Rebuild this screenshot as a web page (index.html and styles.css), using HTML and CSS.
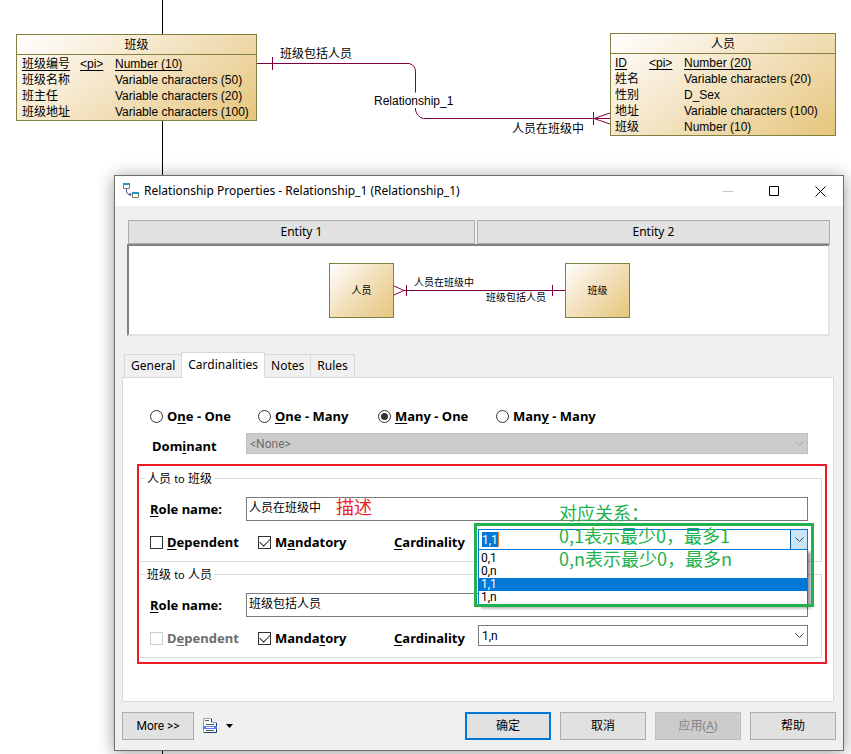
FILE: index.html
```html
<!DOCTYPE html>
<html lang="zh-CN">
<head>
<meta charset="utf-8">
<title>Relationship Properties</title>
<link rel="stylesheet" href="styles.css">
</head>
<body>
<main class="canvas">
  <div class="page-line"></div>

  <svg class="connector" width="353" height="80" viewBox="0 0 353 80" fill="none" stroke="#7f003f" aria-hidden="true">
    <path d="M0 13.5H152Q158.500 15 158.500 22V42.500M158.500 58V60Q160 67 166.500 68.500H353M15.500 7V20M336.500 62V75M337 68.500L353 63M337 68.500L353 74"/>
  </svg>
  <span class="role role-start">班级包括人员</span>
  <span class="role role-name">Relationship_1</span>
  <span class="role role-end">人员在班级中</span>

  <table class="entity entity-class">
    <thead><tr><th colspan="3">班级</th></tr></thead>
    <tbody>
      <tr class="key"><td><u>班级编号</u></td><td><u>&lt;pi&gt;</u></td><td><u>Number (10)</u></td></tr>
      <tr><td>班级名称</td><td></td><td>Variable characters (50)</td></tr>
      <tr><td>班主任</td><td></td><td>Variable characters (20)</td></tr>
      <tr><td>班级地址</td><td></td><td>Variable characters (100)</td></tr>
    </tbody>
  </table>

  <table class="entity entity-person">
    <thead><tr><th colspan="3">人员</th></tr></thead>
    <tbody>
      <tr class="key"><td><u>ID</u></td><td><u>&lt;pi&gt;</u></td><td><u>Number (20)</u></td></tr>
      <tr><td>姓名</td><td></td><td>Variable characters (20)</td></tr>
      <tr><td>性别</td><td></td><td>D_Sex</td></tr>
      <tr><td>地址</td><td></td><td>Variable characters (100)</td></tr>
      <tr><td>班级</td><td></td><td>Number (10)</td></tr>
    </tbody>
  </table>

  <section class="dialog" role="dialog" aria-labelledby="dialog-title">
    <header class="titlebar">
      <svg class="app-icon" width="17" height="16" viewBox="0 0 17 16" aria-hidden="true">
        <path d="M.5 1.500H6.500V5.500H.5ZM9.500 10.500H15.500V14.500H9.500Z" fill="#fff" stroke="#7b7b5c"/>
        <path d="M0 0H7V2H0ZM9 9H16V11H9Z" fill="#2596be"/>
        <path d="M3.500 6V9L5.500 11.500H8.500M7 10V13" fill="none" stroke="#3f48a8"/>
      </svg>
      <h1 id="dialog-title">Relationship Properties - Relationship_1 (Relationship_1)</h1>
      <button type="button" class="caption" aria-label="Minimize" disabled><svg width="11" height="11" viewBox="0 0 11 11"><path d="M0 5.500H10" stroke="#c4c4c4"/></svg></button>
      <button type="button" class="caption" aria-label="Maximize"><svg width="11" height="11" viewBox="0 0 11 11"><path d="M.5 .5H9.500V9.500H.5Z" fill="none" stroke="#000"/></svg></button>
      <button type="button" class="caption" aria-label="Close"><svg width="11" height="11" viewBox="0 0 11 11"><path d="M.5 .5L10.500 10.500M10.500 .5L.5 10.500" stroke="#000"/></svg></button>
    </header>

    <div class="overview">
      <div class="entity-buttons">
        <button type="button" class="btn">Entity 1</button>
        <button type="button" class="btn">Entity 2</button>
      </div>
      <div class="preview">
        <div class="node">人员</div>
        <svg width="171" height="55" viewBox="0 0 171 55" aria-hidden="true">
          <path d="M9 27.500H171M12.500 22V33M158.500 22V33M0 23L10 27.500L0 32" fill="none" stroke="#7f003f"/>
          <text x="20" y="23">人员在班级中</text>
          <text x="92" y="38">班级包括人员</text>
        </svg>
        <div class="node">班级</div>
      </div>
    </div>

    <nav class="tabs" role="tablist">
      <button type="button" role="tab">General</button>
      <button type="button" role="tab" class="active" aria-selected="true">Cardinalities</button>
      <button type="button" role="tab">Notes</button>
      <button type="button" role="tab">Rules</button>
    </nav>

    <form class="panel">
      <div class="kinds">
        <label><input type="radio" name="kind"><span>O<u>n</u>e - One</span></label>
        <label><input type="radio" name="kind"><span><u>O</u>ne - Many</span></label>
        <label><input type="radio" name="kind" checked><span><u>M</u>any - One</span></label>
        <label><input type="radio" name="kind"><span>Man<u>y</u> - Many</span></label>
      </div>
      <div class="dominant">
        <label for="dominant">Dom<u>i</u>nant</label>
        <div class="combo">
          <select id="dominant" disabled><option>&lt;None&gt;</option></select>
          <svg class="chevron" width="9" height="6" viewBox="0 0 9 6"><path d="M.5 .5L4.500 4.500L8.500 .5" fill="none" stroke="#a0a0a0"/></svg>
        </div>
      </div>

      <div class="marked">
        <fieldset>
          <legend>人员 <small>to</small> 班级</legend>
          <div class="role-row">
            <label for="role-a"><u>R</u>ole name:</label>
            <input id="role-a" type="text" value="人员在班级中">
            <span class="note note-red">描述</span>
          </div>
          <div class="option-row">
            <label class="check"><input type="checkbox"><span><u>D</u>ependent</span></label>
            <label class="check"><input type="checkbox" checked><span>M<u>a</u>ndatory</span></label>
            <label for="card-a" class="card-label"><u>C</u>ardinality</label>
            <div class="combo open">
              <div class="combo-field">
                <input id="card-a" type="text" value="1,1" role="combobox" aria-expanded="true">
                <button type="button" aria-label="Cardinality list"><svg width="9" height="6" viewBox="0 0 9 6"><path d="M.5 .5L4.500 4.500L8.500 .5" fill="none" stroke="#444"/></svg></button>
              </div>
              <ul class="options" role="listbox">
                <li role="option">0,1</li>
                <li role="option">0,n</li>
                <li role="option" class="selected" aria-selected="true">1,1</li>
                <li role="option">1,n</li>
              </ul>
              <div class="green-frame"></div>
              <p class="note note-green">对应关系：<br>0,1表示最少0，最多1<br>0,n表示最少0，最多n</p>
            </div>
          </div>
        </fieldset>
        <fieldset>
          <legend>班级 <small>to</small> 人员</legend>
          <div class="role-row">
            <label for="role-b"><u>R</u>ole name:</label>
            <input id="role-b" type="text" value="班级包括人员">
          </div>
          <div class="option-row">
            <label class="check"><input type="checkbox" disabled><span>D<u>e</u>pendent</span></label>
            <label class="check"><input type="checkbox" checked><span>Manda<u>t</u>ory</span></label>
            <label for="card-b" class="card-label"><u>C</u>ardinality</label>
            <div class="combo">
              <select id="card-b"><option>1,n</option></select>
              <svg class="chevron" width="9" height="6" viewBox="0 0 9 6"><path d="M.5 .5L4.500 4.500L8.500 .5" fill="none" stroke="#444"/></svg>
            </div>
          </div>
        </fieldset>
      </div>
    </form>

    <footer class="actions">
      <button type="button" class="btn more">More &gt;&gt;</button>
      <button type="button" class="menu" aria-label="Properties menu">
        <svg width="31" height="16" viewBox="0 0 31 16">
          <path d="M.5 14.500V.5H8.500V4.500H13.500V14.500Z" fill="#fff" stroke="#8aa0c8"/>
          <path d="M1 14.500H13.500V5M8.500 1V4" fill="none" stroke="#1f3864"/>
          <path d="M0 8H14V11H0Z" fill="#5b7cff"/>
          <path d="M2 2.500H6M3 6.500H11M3 12.500H11" stroke="#555"/>
          <path d="M3 9.500H11" stroke="#fff"/>
          <path d="M23 6H30L26.500 10Z" fill="#000"/>
        </svg>
      </button>
      <button type="button" class="btn default">确定</button>
      <button type="button" class="btn">取消</button>
      <button type="button" class="btn" disabled>应用(<u>A</u>)</button>
      <button type="button" class="btn">帮助</button>
    </footer>
  </section>
</main>
</body>
</html>
```
FILE: styles.css
```css
* { box-sizing: border-box; }

body {
  margin: 0;
  background: #fff;
  color: #000;
  font: 12px/16px "Noto Sans", "Noto Sans CJK SC", sans-serif;
}

button, input, select {
  margin: 0;
  font: inherit;
  color: inherit;
  border-radius: 0;
}

u { text-underline-offset: 2px; }

/* Diagram canvas */
.canvas {
  position: relative;
  min-height: 100vh;
  overflow: hidden;
}

.page-line {
  position: absolute;
  top: 0;
  bottom: 0;
  left: 162px;
  border-left: 1px solid #000;
}

.connector {
  position: absolute;
  left: 257px;
  top: 50px;
}

.role, .entity { font: 12px/16px "Liberation Sans", "Noto Sans CJK SC", sans-serif; }

.role { position: absolute; white-space: nowrap; }
.role-start { left: 280px; top: 46px; }
.role-name { left: 374px; top: 93px; }
.role-end { left: 512px; top: 121px; }

.entity {
  position: absolute;
  border: 1px solid #808040;
  border-spacing: 0;
  background: linear-gradient(145deg, #fff, #f3e2c0 50%, #e6c67c);
  white-space: nowrap;
}
.entity th {
  height: 20px;
  padding: 0;
  border-bottom: 1px solid #808040;
  font-weight: 400;
}
.entity td { height: 16px; padding: 0; line-height: 16px; }
.entity .key td { height: 17px; padding-top: 1px; }
.entity td:first-child { padding-left: 5px; }
.entity-class { left: 16px; top: 34px; width: 241px; }
.entity-class td:nth-child(1) { width: 63px; }
.entity-class td:nth-child(2) { width: 35px; }
.entity-person { left: 610px; top: 33px; width: 226px; }
.entity-person td:nth-child(1) { width: 38px; padding-left: 4px; }
.entity-person td:nth-child(2) { width: 35px; }

/* Dialog window */
.dialog {
  position: absolute;
  top: 175px;
  left: 114px;
  right: 7px;
  border: 1px solid #6e6e6e;
  background: #f0f0f0;
  box-shadow: 0 2px 16px rgba(0, 0, 0, 0.4);
}

.titlebar {
  display: flex;
  align-items: center;
  height: 30px;
  padding-left: 8px;
  background: #fff;
}
.titlebar h1 {
  flex: 1;
  margin: 0 0 0 4px;
  font-size: 12px;
  font-weight: 400;
}
.caption {
  display: flex;
  align-items: center;
  justify-content: center;
  width: 46px;
  height: 28px;
  padding: 0;
  border: 0;
  background: none;
}

.btn {
  height: 28px;
  padding: 0;
  border: 1px solid #adadad;
  background: #e1e1e1;
}
.btn:disabled { border-color: #bfbfbf; background: #ccc; color: #838383; }
.btn.default { border: 2px solid #0078d7; }

.overview { padding: 14px 13px 0 12px; }
.entity-buttons {
  display: flex;
  gap: 2px;
  padding-left: 1px;
}
.entity-buttons .btn { flex: 1 1 346px; height: 24px; }
.entity-buttons .btn + .btn { flex-basis: 352px; }

.preview {
  display: flex;
  align-items: center;
  justify-content: center;
  height: 92px;
  padding-left: 2px;
  border: 2px solid;
  border-color: #828282 #e3e3e3 #e3e3e3 #828282;
  background: #fff;
}
.preview text { font-size: 10px; }
.node {
  display: flex;
  align-items: center;
  justify-content: center;
  width: 65px;
  height: 55px;
  border: 1px solid #808040;
  background: linear-gradient(135deg, #fff, #f3e2c0 45%, #e6c67c);
  font-size: 10px;
}

.tabs {
  display: flex;
  align-items: flex-end;
  height: 41px;
  padding-left: 10px;
}
.tabs button {
  height: 23px;
  margin-left: -1px;
  padding: 0 6px;
  border: 1px solid #d9d9d9;
  border-bottom: 0;
  background: #f0f0f0;
}
.tabs .active {
  position: relative;
  height: 26px;
  margin-bottom: -1px;
  padding-bottom: 2px;
  background: #fff;
}

.panel {
  margin: 0 9px 0 7px;
  padding: 30px 6px 37px 14px;
  border: 1px solid #d9d9d9;
  background: #fff;
}

.panel label { font-size: 13px; font-weight: 700; white-space: nowrap; }

.kinds {
  display: grid;
  grid-template-columns: 108px 120px 118px 1fr;
  padding-left: 13px;
}
.kinds label, .check { display: flex; align-items: center; gap: 4px; }

input[type="radio"], input[type="checkbox"] {
  appearance: none;
  display: grid;
  place-items: center;
  width: 13px;
  height: 13px;
  border: 1px solid #333;
  background: #fff;
}
input[type="radio"] { border-radius: 50%; }
input[type="radio"]:checked::before {
  content: "";
  width: 7px;
  height: 7px;
  border-radius: 50%;
  background: #333;
}
input[type="checkbox"]:checked::before {
  content: "";
  width: 9px;
  height: 5px;
  margin-bottom: 3px;
  border: solid #333;
  border-width: 0 0 1px 1px;
  transform: rotate(-45deg);
}
input[type="checkbox"]:disabled { border-color: #ccc; }
input:disabled + span { color: #6d6d6d; }

.dominant {
  display: flex;
  align-items: flex-end;
  margin-top: 9px;
  padding: 0 19px 0 15px;
}
.dominant label { width: 94px; }

.combo { position: relative; display: grid; flex: 1; }
.combo > * { grid-area: 1 / 1; }
.combo select, .role-row input {
  width: 100%;
  border: 1px solid #7a7a7a;
  background: #fff;
}
.combo select {
  appearance: none;
  height: 21px;
  padding: 0 3px;
  font-family: Roboto, sans-serif;
}
.combo select:disabled {
  border-color: #bfbfbf;
  background: #ccc;
  color: #6d6d6d;
  opacity: 1;
}
.chevron { place-self: center end; margin-right: 4px; pointer-events: none; }

.marked {
  margin-top: 10px;
  border: 2px solid #ed1c24;
  padding: 4px 3px 4px 1px;
}

fieldset {
  min-width: 0;
  margin: 0;
  padding: 10px 13px 11px 10px;
  border: 1px solid #dcdcdc;
  border-left: 0;
}
fieldset + fieldset { margin-top: 4px; }
legend { margin-left: -5px; padding: 0 2px; line-height: 17px; }
legend small { font-size: 11px; }

.role-row { position: relative; display: flex; align-items: center; }
.role-row label { width: 96px; }
.role-row input { flex: 1; height: 24px; padding: 0 2px 4px; }

.option-row {
  display: grid;
  grid-template-columns: 108px 136px 84px 1fr;
  align-items: end;
  margin-top: 8px;
}

.combo.open { grid-template-rows: 21px; }
.combo-field {
  display: flex;
  align-items: center;
  justify-content: space-between;
  padding-left: 3px;
  border: 1px solid #0078d7;
  background: #fff;
}
.combo-field input {
  width: 17px;
  height: 15px;
  padding: 0;
  border: 0;
  border-right: 1px solid #f08030;
  background: #0078d7;
  color: #fff;
  font-family: Roboto, sans-serif;
}
.combo-field button {
  display: flex;
  align-items: center;
  justify-content: center;
  align-self: stretch;
  width: 17px;
  padding: 0;
  border: 1px solid #005499;
  border-width: 0 0 0 1px;
  background: #cce4f7;
}

.options {
  position: absolute;
  z-index: 1;
  top: 20px;
  left: 0;
  right: 0;
  margin: 0;
  padding: 2px 0 0;
  border: 1px solid #0078d7;
  background: #fff;
  box-shadow: 3px 3px 3px rgba(0, 0, 0, 0.4);
  font: 12px/13px Roboto, sans-serif;
  list-style: none;
}
.options li { padding-left: 2px; }
.options .selected { background: #0078d7; color: #fff; }

/* Annotations over the form */
.green-frame {
  position: absolute;
  z-index: 2;
  inset: -6px -6px auto -4px;
  height: 84px;
  border: 3px solid #22b14c;
  pointer-events: none;
}
.note {
  position: absolute;
  z-index: 3;
  margin: 0;
  font: 18px/23px "Noto Sans CJK SC", sans-serif;
  white-space: nowrap;
  pointer-events: none;
}
.note-red { top: -2px; left: 186px; color: #ed1c24; }
.note-green { top: -28px; left: 81px; color: #22b14c; }

.actions {
  display: flex;
  gap: 9px;
  padding: 10px 7px;
}
.actions .btn { width: 86px; }
.actions .more { width: 72px; font-family: Roboto, sans-serif; }
.menu {
  display: flex;
  align-items: center;
  margin-right: auto;
  padding: 0;
  border: 0;
  background: none;
}
```
